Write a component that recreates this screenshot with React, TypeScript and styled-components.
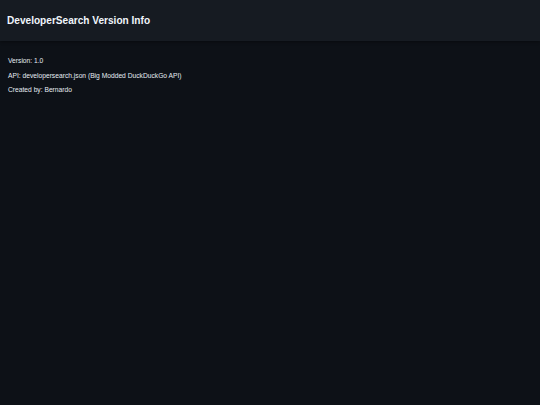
import React from "react";
import styled, { createGlobalStyle } from "styled-components";

const Global = createGlobalStyle`
  html, body { margin: 0; padding: 0; background: #0d1117; }
  body { font-family: "Liberation Sans", Arial, sans-serif; color: #e6edf3; }
`;

const Page = styled.div`
  min-height: 405px;
  background: #0d1117;
`;

const Header = styled.header`
  height: 41px;
  background: #161b22;
  display: flex;
  align-items: center;
  padding: 0 7px;
  box-sizing: border-box;
  box-shadow: 0 1px 3px rgba(0, 0, 0, 0.4);
`;

const Title = styled.h1`
  margin: 0;
  font-size: 10.1px;
  font-weight: 700;
  color: #f0f6fc;
`;

const Content = styled.main`
  padding: 16px 8px;
  display: flex;
  flex-direction: column;
  gap: 6.5px;
`;

const Line = styled.p`
  margin: 0;
  font-size: 6.7px;
  line-height: 8px;
  color: #e6edf3;
`;

export default function App() {
  return (
    <Page>
      <Global />
      <Header>
        <Title>DeveloperSearch Version Info</Title>
      </Header>
      <Content>
        <Line>Version: 1.0</Line>
        <Line>API: developersearch.json (Big Modded DuckDuckGo API)</Line>
        <Line>Created by: Bernardo</Line>
      </Content>
    </Page>
  );
}
